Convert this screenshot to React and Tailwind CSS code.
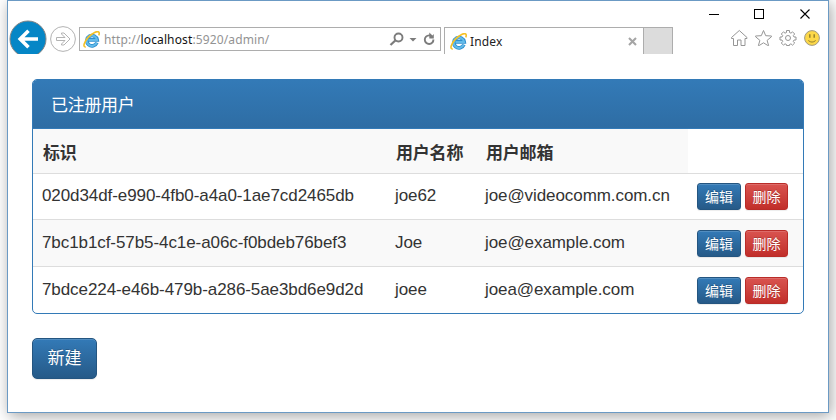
import React from "react";

const users = [
  { id: "020d34df-e990-4fb0-a4a0-1ae7cd2465db", name: "joe62", email: "joe@videocomm.com.cn" },
  { id: "7bc1b1cf-57b5-4c1e-a06c-f0bdeb76bef3", name: "Joe", email: "joe@example.com" },
  { id: "7bdce224-e46b-479b-a286-5ae3bd6e9d2d", name: "joee", email: "joea@example.com" },
];

function IELogo() {
  return (
    <svg width="17" height="17" viewBox="0 0 17 17" className="shrink-0" fill="none">
      <path d="M13.900 11.600A5.200 5.200 0 1 1 14.200 8.900H5.500" stroke="#2f8fce" strokeWidth="3.600" />
      <path d="M13.700 11.600A5.200 5.200 0 1 1 14 8.900H5.500" stroke="#62bbea" strokeWidth="2" />
      <path d="M2.800 15.900C-.6 16.400 1.100 10.800 5.200 6.400C9.500 1.700 14.600-.5 15.900 1.300C16.400 2 16.200 3.200 15.700 4.300" stroke="#f5c026" strokeWidth="1.600" />
    </svg>
  );
}

function TitleBar() {
  return (
    <div className="flex h-[19px] items-end justify-end pr-[13px]">
      <svg width="108" height="12" viewBox="0 0 108 12" fill="none" stroke="#000" shapeRendering="crispEdges">
        <path d="M2 6.500h10M47.500 1.500h9v9h-9z" />
        <path d="M93.500 1.500l9 9M102.500 1.500l-9 9" shapeRendering="auto" strokeWidth="1.100" />
      </svg>
    </div>
  );
}

function Toolbar() {
  return (
    <div className="flex h-[34px] items-start overflow-hidden">
      <svg width="38" height="38" viewBox="0 0 38 38" className="ml-px shrink-0" fill="none">
        <circle cx="19" cy="19" r="18" fill="#0586c6" stroke="#858585" />
        <path d="M29 19H12M19.500 10.700L11.200 19l8.300 8.300" stroke="#fff" strokeWidth="3.600" />
      </svg>
      <svg width="28" height="28" viewBox="0 0 28 28" className="ml-[2px] mt-[5px] shrink-0" fill="none" stroke="#b3b3b3">
        <circle cx="14" cy="14" r="12.400" />
        <path d="M7.500 12.500h8.500l-3.500-3.500v-1h2.500l6 6-6 6h-2.500v-1l3.500-3.500H7.500z" />
      </svg>
      <div className="ml-[2px] mt-[7px] flex h-6 w-[362px] shrink-0 items-center border border-[#adadad] pl-[3px] pr-[5px]">
        <IELogo />
        <span className="ml-1 whitespace-nowrap pt-px font-['Noto_Sans',sans-serif] text-[12px] leading-5 tracking-[0.13px] text-[#939393]">
          http://<span className="text-[#111]">localhost</span>:5920/admin/
        </span>
        <svg width="48" height="16" viewBox="0 0 48 16" className="ml-auto shrink-0" fill="none" stroke="#7c7c7c">
          <circle cx="11.500" cy="6.500" r="4" strokeWidth="1.900" />
          <path d="M8.300 9.500L3.500 14" strokeWidth="2.300" />
          <path d="M22.500 7h7l-3.500 3.500z" fill="#7c7c7c" stroke="none" />
          <path d="M46.400 8.500A4.300 4.300 0 1 1 42.100 4.400h1.500" strokeWidth="1.900" />
          <path d="M42.300 1.500l3.200 2.900 1.300-1.500v4.500h-4.500z" fill="#7c7c7c" stroke="none" />
        </svg>
      </div>
      <div className="ml-[3px] mt-[7px] flex h-[27px] w-[199px] shrink-0 items-center border-l border-t border-[#adadad] pl-[5px] pr-[6px]">
        <IELogo />
        <span className="ml-[3px] pt-px font-['Noto_Sans',sans-serif] text-[12px] leading-5 tracking-[0.15px] text-[#222]">Index</span>
        <svg width="9" height="9" viewBox="0 0 9 9" className="ml-auto" stroke="#a5a5a5" strokeWidth="2.100">
          <path d="M1 1l7 7M8 1L1 8" />
        </svg>
      </div>
      <div className="mt-[7px] h-[27px] w-[30px] shrink-0 border border-b-0 border-[#adadad] bg-[#dcdcdc]" />
      <svg width="92" height="18" viewBox="0 0 92 18" className="ml-[57px] mt-[9px] shrink-0" fill="none" stroke="#969696" strokeLinejoin="round">
        <path d="M3.500 9.500v7h4V11h3.500v5.500h4v-7H17V8.500L9.300 1.500 1.500 8.500v1z" />
        <path d="M33.500 1.500l2.200 5.200 5.800.3v.7l-4.400 3.700 1.500 5.100h-.8l-4.300-2.700-4.300 2.700h-.8l1.500-5.100-4.400-3.700V7l5.800-.3z" />
        <path d="M56.500 1.500h3v2l1.500.7 1.500-1.400 2.200 2.200-1.400 1.500.7 1.500h2v3h-2l-.7 1.500 1.400 1.500-2.200 2.200-1.500-1.400-1.500.7v1h-3v-1l-1.500-.7-1.500 1.400-2.200-2.200 1.400-1.500-.7-1.500h-2V8h2l.7-1.500L51.300 5l2.200-2.200L55 4.200l1.500-.7z" />
        <circle cx="58" cy="9" r="2.500" />
        <circle cx="82" cy="9" r="7.400" fill="#fcd849" stroke="#a09a86" />
        <path d="M79.800 5.200v3.500M84.200 5.200v3.500" stroke="#98822b" strokeWidth="1.500" />
        <path d="M78.300 11.500q3.700 3.200 7.400 0" stroke="#98822b" />
      </svg>
    </div>
  );
}

function UserRow({ user, className }) {
  return (
    <div className={`grid grid-cols-[353px_90px_211px_1fr] border-t border-[#ddd] pl-[10px] text-[#333] ${className}`}>
      <span className="-ml-px pt-px leading-6 tracking-[-0.08px]">{user.id}</span>
      <span className="-ml-px pt-px leading-6 tracking-[-0.08px]">{user.name}</span>
      <span className="-ml-px pt-px leading-6 tracking-[-0.08px]">{user.email}</span>
      <div className="flex gap-1">
        <button className="h-[27px] w-11 rounded-[3px] border border-[#245580] bg-linear-to-b from-[#337ab7] to-[#265a88] text-[14px] leading-[26px] text-white shadow-[inset_0_1px_0_rgba(255,255,255,0.15),0_1px_1px_rgba(0,0,0,0.075)] [text-shadow:0_-1px_0_rgba(0,0,0,0.2)]">编辑</button>
        <button className="h-[27px] w-[43px] rounded-[3px] border border-[#b92c28] bg-linear-to-b from-[#d9534f] to-[#c12e2a] text-[14px] leading-[26px] text-white shadow-[inset_0_1px_0_rgba(255,255,255,0.15),0_1px_1px_rgba(0,0,0,0.075)] [text-shadow:0_-1px_0_rgba(0,0,0,0.2)]">删除</button>
      </div>
    </div>
  );
}

export default function App() {
  return (
    <div className="h-[420px] w-[836px] overflow-hidden bg-white pl-[7px] font-['Liberation_Sans','Noto_Sans_CJK_SC',sans-serif]">
      <div className="h-[413px] w-[822px] border border-[#6b9ac4] bg-white shadow-[2px_3px_14px_rgba(0,0,0,0.36)]">
        <TitleBar />
        <Toolbar />
        <main className="pl-6 pt-[25px] text-[17px]">
          <section className="h-[235px] w-[772px] overflow-hidden rounded-[5px] border border-[#337ab7]">
            <h1 className="h-[49px] border-b border-[#337ab7] bg-linear-to-b from-[#337ab7] to-[#2e6da4] pl-[18px] leading-[51px] tracking-[-0.3px] text-white">已注册用户</h1>
            <div className="grid h-11 w-[655px] grid-cols-[353px_90px_211px] bg-[#f9f9f9] pl-[10px] font-bold leading-[50px] tracking-[-0.2px] text-[#333]">
              <span>标识</span>
              <span>用户名称</span>
              <span>用户邮箱</span>
            </div>
            <UserRow user={users[0]} className="h-[46px] pt-[9px]" />
            <UserRow user={users[1]} className="h-[47px] bg-[#f9f9f9] pt-[10px]" />
            <UserRow user={users[2]} className="h-[47px] pt-[10px]" />
          </section>
          <button className="mt-6 block h-[41px] w-[65px] rounded-[5px] border border-[#245580] bg-linear-to-b from-[#337ab7] to-[#265a88] leading-[40px] text-white shadow-[inset_0_1px_0_rgba(255,255,255,0.15),0_1px_1px_rgba(0,0,0,0.075)] [text-shadow:0_-1px_0_rgba(0,0,0,0.2)]">新建</button>
        </main>
      </div>
    </div>
  );
}
